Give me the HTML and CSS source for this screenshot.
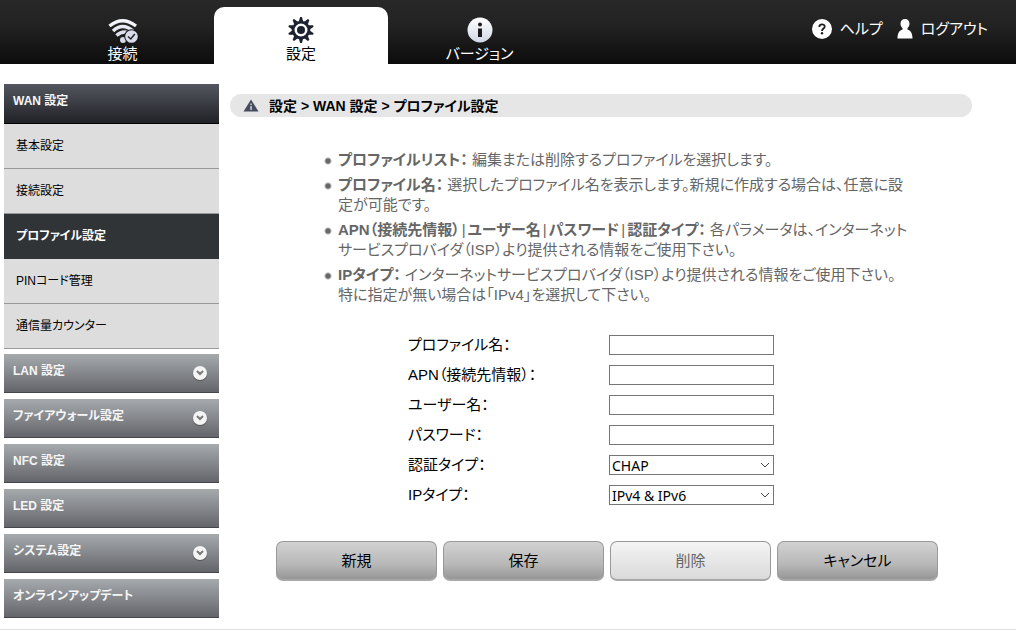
FILE: index.html
```
<!DOCTYPE html>
<html lang="ja">
<head>
    <meta charset="UTF-8">
    <meta name="viewport" content="width=device-width, initial-scale=1.0">
    <title>プロファイル設定</title>
    <link rel="stylesheet" href="styles.css">
</head>
<body>
    <header>
        <nav class="tabs">
            <a href="#" class="tab">
                <svg width="32" height="28" viewBox="0 0 32 28">
                    <defs>
                        <linearGradient id="light" x1="0" y1="0" x2="0" y2="1">
                            <stop offset="0" stop-color="#ffffff"/>
                            <stop offset="1" stop-color="#d3d7e6"/>
                        </linearGradient>
                    </defs>
                    <g fill="none" stroke="#f4f5fa" stroke-width="3.400">
                        <path d="M2.500 10Q15.500 -0.500 29 10"/>
                        <path d="M6 15Q15.500 6 26 15" stroke="#e8eaf3"/>
                        <path d="M9.500 19.500Q15 14.500 21 16.500" stroke="#dfe2ee"/>
                    </g>
                    <circle cx="16" cy="24" r="3" fill="#d7dbe9"/>
                    <circle cx="24.500" cy="20.500" r="7.300" fill="#191919"/>
                    <circle cx="24.500" cy="20.500" r="6.300" fill="#d9dcea"/>
                    <path d="M21 20.500l2.800 2.500 4-5" fill="none" stroke="#222" stroke-width="1.500"/>
                </svg>
                <span>接続</span>
            </a>
            <a href="#" class="tab active">
                <svg width="28" height="28" viewBox="-14 -14 28 28">
                    <g fill="#1d2230">
                        <g id="teeth">
                            <path d="M-2.200 -8.500L-0.900 -13H0.900L2.200 -8.500z"/>
                            <path d="M-2.200 -8.500L-0.900 -13H0.900L2.200 -8.500z" transform="rotate(36)"/>
                            <path d="M-2.200 -8.500L-0.900 -13H0.900L2.200 -8.500z" transform="rotate(72)"/>
                            <path d="M-2.200 -8.500L-0.900 -13H0.900L2.200 -8.500z" transform="rotate(108)"/>
                            <path d="M-2.200 -8.500L-0.900 -13H0.900L2.200 -8.500z" transform="rotate(144)"/>
                        </g>
                        <use href="#teeth" transform="rotate(180)"/>
                        <circle r="4"/>
                    </g>
                    <circle r="7.900" fill="none" stroke="#1d2230" stroke-width="2.800"/>
                </svg>
                <span>設定</span>
            </a>
            <a href="#" class="tab">
                <svg width="28" height="28" viewBox="0 0 28 28">
                    <circle cx="14" cy="14" r="12.500" fill="url(#light)"/>
                    <circle cx="14" cy="8.500" r="2" fill="#1b1b1b"/>
                    <path d="M12 12.500h4v8.500h-4z" fill="#1b1b1b"/>
                </svg>
                <span>バージョン</span>
            </a>
        </nav>
        <div class="tools">
            <a href="#">
                <svg width="20" height="20" viewBox="0 0 20 20">
                    <circle cx="10" cy="10" r="10" fill="#fff"/>
                    <path d="M7.300 8C7.300 4.500 12.700 4.500 12.700 7.700C12.700 9.600 10 9.600 10 12" fill="none" stroke="#1b1b1b" stroke-width="1.800"/>
                    <circle cx="10" cy="14.300" r="1.200" fill="#1b1b1b"/>
                </svg>
                ヘルプ
            </a>
            <a href="#">
                <svg width="16" height="20" viewBox="0 0 16 20">
                    <path d="M8 0C5.300 0 3.500 2 3.500 4.500C3.500 6.600 4.300 8 5.500 9L5.500 10.500C2.500 11.500 0.500 14 0.500 19.500H15.500C15.500 14 13.500 11.500 10.500 10.500L10.500 9C11.700 8 12.500 6.600 12.500 4.500C12.500 2 10.700 0 8 0z" fill="#fff"/>
                </svg>
                ログアウト
            </a>
        </div>
    </header>
    <div class="page">
        <aside>
            <a href="#" class="menu open">WAN 設定</a>
            <div class="submenu">
                <a href="#">基本設定</a>
                <a href="#">接続設定</a>
                <a href="#" class="current">プロファイル設定</a>
                <a href="#">PINコード管理</a>
                <a href="#">通信量カウンター</a>
            </div>
            <a href="#" class="menu">LAN 設定 <span class="arrow"><svg width="8" height="6" viewBox="0 0 8 6"><path d="M1 1l3 3 3-3"/></svg></span></a>
            <a href="#" class="menu">ファイアウォール設定 <span class="arrow"><svg width="8" height="6" viewBox="0 0 8 6"><path d="M1 1l3 3 3-3"/></svg></span></a>
            <a href="#" class="menu">NFC 設定</a>
            <a href="#" class="menu">LED 設定</a>
            <a href="#" class="menu">システム設定 <span class="arrow"><svg width="8" height="6" viewBox="0 0 8 6"><path d="M1 1l3 3 3-3"/></svg></span></a>
            <a href="#" class="menu">オンラインアップデート</a>
        </aside>
        <main>
            <h1>
                <svg width="16" height="13" viewBox="0 0 16 13">
                    <path d="M8 0.500L15.500 12.500H0.500z" fill="#474b5c"/>
                    <path d="M7.300 4.500h1.500v1.500h-1.500zM7.300 7h1.500v4h-1.500z" fill="#d0d2da"/>
                </svg>
                設定 &gt; WAN 設定 &gt; プロファイル設定
            </h1>
            <ul class="notes">
                <li><b>プロファイルリスト：</b> 編集または削除するプロファイルを選択します。</li>
                <li><b>プロファイル名：</b> 選択したプロファイル名を表示します。新規に作成する場合は、任意に設定が可能です。</li>
                <li><b>APN（接続先情報）</b><span class="sep">|</span><b>ユーザー名</b><span class="sep">|</span><b>パスワード</b><span class="sep">|</span><b>認証タイプ：</b> 各パラメータは、インターネットサービスプロバイダ（ISP）より提供される情報をご使用下さい。</li>
                <li><b>IPタイプ：</b> インターネットサービスプロバイダ（ISP）より提供される情報をご使用下さい。<br>特に指定が無い場合は「IPv4」を選択して下さい。</li>
            </ul>
            <form>
                <div class="fields">
                    <label for="profile">プロファイル名：</label>
                    <input type="text" id="profile">
                    <label for="apn">APN（接続先情報）：</label>
                    <input type="text" id="apn">
                    <label for="user">ユーザー名：</label>
                    <input type="text" id="user">
                    <label for="password">パスワード：</label>
                    <input type="password" id="password">
                    <label for="auth">認証タイプ：</label>
                    <select id="auth">
                        <option>CHAP</option>
                        <option>PAP</option>
                    </select>
                    <label for="iptype">IPタイプ：</label>
                    <select id="iptype">
                        <option>IPv4 &amp; IPv6</option>
                        <option>IPv4</option>
                        <option>IPv6</option>
                    </select>
                </div>
                <div class="buttons">
                    <button type="button">新規</button>
                    <button type="button">保存</button>
                    <button type="button" disabled>削除</button>
                    <button type="button">キャンセル</button>
                </div>
            </form>
        </main>
    </div>
    <footer></footer>
</body>
</html>
```
FILE: styles.css
```
*{
    margin: 0;
    padding: 0;
    box-sizing: border-box;
}
body{
    font-family: "Liberation Sans", "Noto Sans CJK JP", sans-serif;
    font-size: 15px;
    line-height: 20px;
    font-feature-settings: "palt";
    background-color: white;
    color: black;
}
a{
    color: inherit;
    text-decoration: none;
}
header{
    display: flex;
    justify-content: space-between;
    height: 64px;
    padding-right: 28px;
    background: linear-gradient(#282828, #222 40%, #0c0c0c);
    color: white;
}
.tabs{
    display: flex;
    align-items: flex-end;
    margin-left: 31px;
}
.tab{
    display: flex;
    flex-direction: column;
    align-items: center;
    width: 183px;
    height: 57px;
    padding-top: 9px;
}
.tab.active{
    width: 174px;
    background-color: white;
    color: black;
    border-radius: 10px 10px 0 0;
}
.tools{
    display: flex;
    gap: 14px;
    height: 57px;
}
.tools a{
    display: flex;
    align-items: center;
    gap: 8px;
}
.page{
    display: flex;
    align-items: flex-start;
    gap: 11px;
    padding: 20px 44px 11px 4px;
}
aside{
    flex: none;
    width: 215px;
    font-size: 12px;
}
.menu{
    display: flex;
    justify-content: space-between;
    height: 39px;
    margin-bottom: 6px;
    padding: 0 12px 0 9px;
    line-height: 34px;
    font-weight: bold;
    color: #f6f6f6;
    background: linear-gradient(#a6aaad, #64656a);
    border-bottom: 1px solid #45464c;
}
.menu:last-child{
    margin-bottom: 0;
}
.menu.open{
    height: 40px;
    margin-bottom: 0;
    background: linear-gradient(#54565f, #212227);
    border-bottom-color: black;
}
.submenu{
    margin-bottom: 5px;
}
.submenu a{
    display: block;
    height: 45px;
    padding-left: 12px;
    line-height: 44px;
    background-color: #ddd;
    border-bottom: 1px solid #999;
}
.submenu .current{
    background-color: #303437;
    border-bottom-color: #303437;
    color: white;
    font-weight: bold;
}
.arrow{
    display: flex;
    align-items: center;
    justify-content: center;
    width: 14px;
    height: 14px;
    margin-top: 12px;
    border-radius: 50%;
    background-color: #f4f4f4;
    box-shadow: 0 1px 1px #555;
}
.arrow path{
    fill: none;
    stroke: #777;
    stroke-width: 2;
}
main{
    flex: 1;
    padding-top: 10px;
}
h1{
    display: flex;
    align-items: center;
    gap: 10px;
    height: 23px;
    padding-left: 13px;
    border-radius: 12px;
    background-color: #e6e6e6;
    font-size: 14px;
}
.notes{
    max-width: 682px;
    margin-top: 33px;
    padding-left: 94px;
    list-style: none;
    color: #666;
}
.notes li{
    margin-bottom: 5px;
    padding-left: 14px;
    background: radial-gradient(circle at 4px 11px, #666 2px, transparent 4px);
}
.sep{
    margin: 0 2px;
}
.fields{
    display: grid;
    grid-template-columns: 201px 165px;
    grid-auto-rows: 30px;
    align-items: center;
    margin: 25px 0 0 178px;
}
input, select{
    width: 165px;
    height: 20px;
    padding: 0 2px;
    border: 1px solid #767676;
    background-color: white;
    color: black;
    font-family: "Noto Sans", sans-serif;
    font-size: 14px;
}
select{
    appearance: none;
    background-image: url("data:image/svg+xml,%3Csvg xmlns='http://www.w3.org/2000/svg' width='10' height='6'%3E%3Cpath d='M1 1l4 4 4-4' fill='none' stroke='%23444'/%3E%3C/svg%3E");
    background-repeat: no-repeat;
    background-position: right 3px center;
}
.buttons{
    display: flex;
    gap: 6px;
    margin: 31px 0 0 46px;
}
button{
    width: 161px;
    height: 40px;
    border: 1px solid #999;
    border-bottom: 2px solid #a8a8a8;
    border-radius: 7px;
    background: linear-gradient(#d2d2d2, #b8b8b8 60%, #969696);
    color: black;
    font: inherit;
    font-feature-settings: inherit;
}
button:disabled{
    background: linear-gradient(#f4f4f4, #dadada);
    color: #666;
}
footer{
    border-top: 1px solid #e2e2e2;
}
```
